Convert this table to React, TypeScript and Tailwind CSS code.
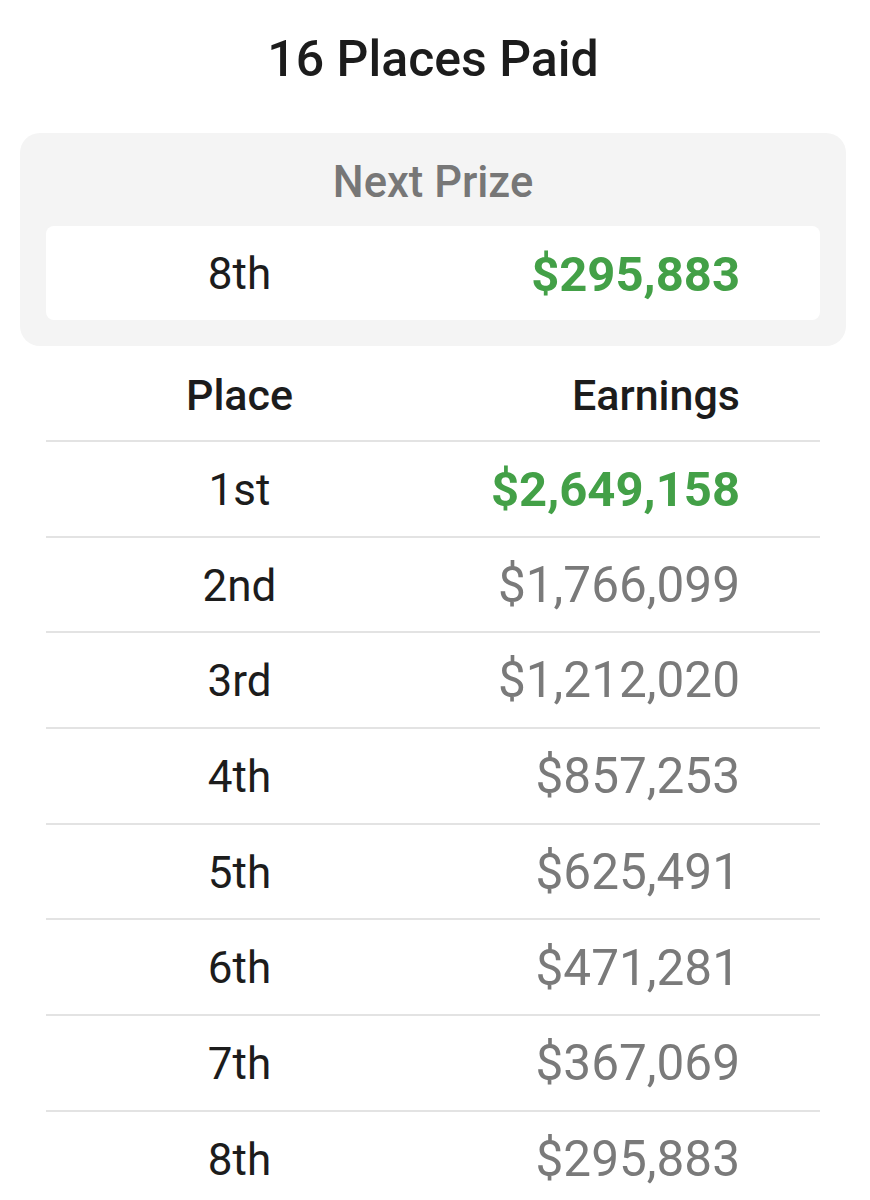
const ROWS = [
  { place: '1st', amount: '$2,649,158' },
  { place: '2nd', amount: '$1,766,099' },
  { place: '3rd', amount: '$1,212,020' },
  { place: '4th', amount: '$857,253' },
  { place: '5th', amount: '$625,491' },
  { place: '6th', amount: '$471,281' },
  { place: '7th', amount: '$367,069' },
  { place: '8th', amount: '$295,883' },
];

export default function App() {
  return (
    <div className="min-h-[1200px] bg-white font-['Roboto',sans-serif]">
      <div className="mr-[4px] flex h-[118px] items-center justify-center">
        <h1 className="text-[50px] font-medium leading-none text-[#1c1c1c]">16 Places Paid</h1>
      </div>

      <div className="ml-[20px] mr-[24px] mt-[15px] rounded-[20px] bg-[#f4f4f4] px-[26px] pb-[26px]">
        <div className="flex h-[93px] items-center justify-center pt-[6px]">
          <p className="text-[43.5px] font-medium leading-none text-[#777777]">Next Prize</p>
        </div>
        <div className="flex h-[94px] items-center rounded-[8px] bg-white pt-[2px]">
          <div className="w-1/2 text-center text-[44px] leading-none text-[#1c1c1c]">8th</div>
          <div className="w-1/2 pr-[80px] text-right text-[49px] font-bold leading-none text-[#43a047]">
            $295,883
          </div>
        </div>
      </div>

      <div className="ml-[46px] mr-[50px]">
        <div className="flex h-[96px] items-center border-b-2 border-[#e3e3e3] pt-[4px]">
          <div className="w-1/2 text-center text-[43px] font-medium leading-none text-[#1c1c1c]">Place</div>
          <div className="w-1/2 pr-[80px] text-right text-[43px] font-medium leading-none text-[#1c1c1c]">
            Earnings
          </div>
        </div>
        {ROWS.map((row, i) => (
          <div
            key={row.place}
            className="flex h-[95.7px] items-center border-b-2 border-[#e3e3e3] pt-[2px]"
          >
            <div className="w-1/2 text-center text-[44px] leading-none text-[#1c1c1c]">{row.place}</div>
            <div
              className={
                i === 0
                  ? 'w-1/2 pr-[80px] text-right text-[49px] font-bold leading-none text-[#43a047]'
                  : 'w-1/2 pr-[80px] text-right text-[49.5px] leading-none text-[#7a7a7a]'
              }
            >
              {row.amount}
            </div>
          </div>
        ))}
      </div>
    </div>
  );
}
